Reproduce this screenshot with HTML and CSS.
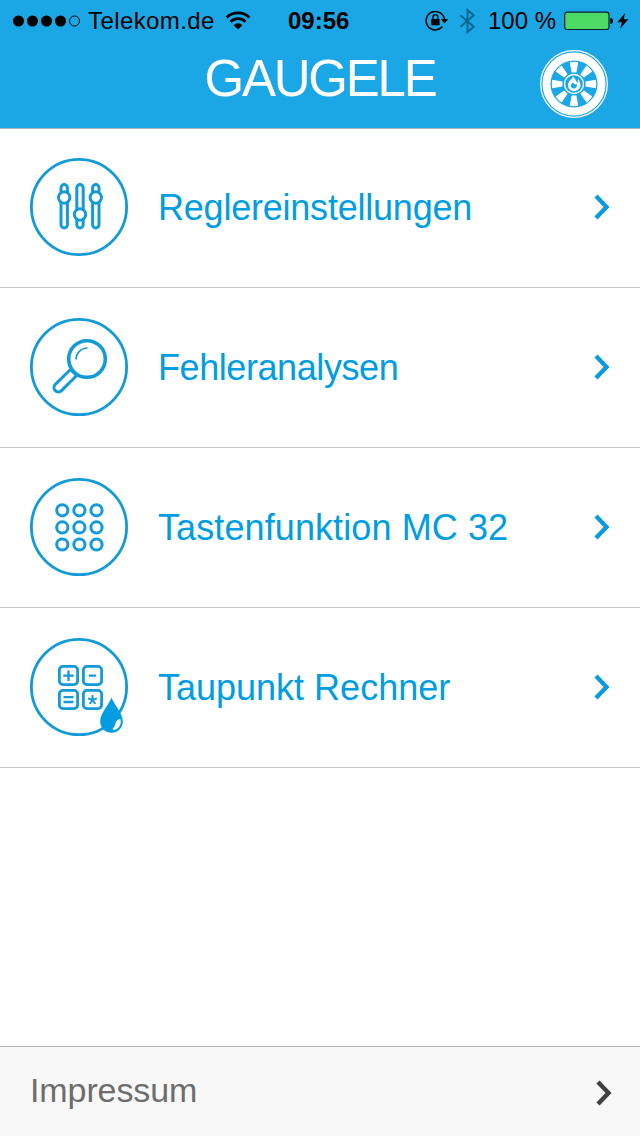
FILE: index.html
```html
<!DOCTYPE html>
<html lang="de">
<head>
    <meta charset="utf-8">
    <title>Gaugele</title>
    <link rel="stylesheet" href="styles.css">
</head>
<body>
    <header class="header">
        <div class="status">
            <svg class="signal" width="68" height="12" viewBox="0 0 68 12">
                <circle cx="5.500" cy="6" r="5.5"/>
                <circle cx="19.500" cy="6" r="5.5"/>
                <circle cx="33.500" cy="6" r="5.5"/>
                <circle cx="47.500" cy="6" r="5.5"/>
                <circle cx="61.500" cy="6" r="5" fill="none" stroke="#000"/>
            </svg>
            <span class="carrier">Telekom.de</span>
            <svg class="wifi" width="26" height="20" viewBox="0 0 26 20" fill="none" stroke="#000" stroke-width="2.8">
                <path d="M1.7 6.4a16.2 16.2 0 0 1 22.6 0M5.5 10.7a10.8 10.8 0 0 1 15 0"/>
                <path d="M8.6 14.2a6.2 6.2 0 0 1 8.8 0L13 18.5z" fill="#000" stroke="none"/>
            </svg>
            <span class="time">09:56</span>
            <svg class="lock" width="24" height="22" viewBox="0 0 24 22">
                <path d="M17.400 16.600a9.200 9.200 0 1 1 2.100-6.600" fill="none" stroke="#000" stroke-width="1.5"/>
                <path d="M16 9.300h7.200L19.600 13.500z"/>
                <rect x="6.2" y="9" width="8.400" height="6.2" rx=".6"/>
                <path d="M8 10V7a2.400 2.400 0 0 1 4.8 0V10" fill="none" stroke="#000" stroke-width="1.4"/>
            </svg>
            <svg class="bluetooth" width="17" height="26" viewBox="0 0 17 26" fill="none" stroke="#096791" stroke-width="2">
                <path d="M1.5 7.3 14.7 18.7 8.5 24V2l6.2 5.3L1.5 18.7"/>
            </svg>
            <span class="percent">100 %</span>
            <svg class="battery" width="50" height="20" viewBox="0 0 50 20">
                <rect x=".7" y="1.2" width="44.3" height="17.3" rx="2.5" fill="#4cd964" stroke="#06222f" stroke-width="1.2"/>
                <path d="M46.3 7c1.8 0 2.7 1.2 2.7 3s-.9 3-2.7 3z"/>
            </svg>
            <svg class="bolt" width="12" height="16" viewBox="0 0 12 16">
                <path d="M8 0 .5 9.2h4.6L3 16l8.3-9.8H6.7z"/>
            </svg>
        </div>
        <div class="titlebar">
            <h1 class="title">GAUGELE</h1>
            <svg class="wheel" width="68" height="68" viewBox="-34 -34 68 68">
                <circle r="33.3" fill="none" stroke="#fff" stroke-width="1.3"/>
                <circle r="27.5" fill="none" stroke="#fff" stroke-width="8"/>
                <defs>
                    <path id="spoke" d="M-2.400-11.500-4.200-21.800a22 22 0 0 1 8.400 0L2.400-11.500z"/>
                </defs>
                <g fill="#fff">
                    <use href="#spoke"/>
                    <use href="#spoke" transform="rotate(45)"/>
                    <use href="#spoke" transform="rotate(90)"/>
                    <use href="#spoke" transform="rotate(135)"/>
                    <use href="#spoke" transform="rotate(180)"/>
                    <use href="#spoke" transform="rotate(225)"/>
                    <use href="#spoke" transform="rotate(270)"/>
                    <use href="#spoke" transform="rotate(315)"/>
                </g>
                <circle r="9.500" fill="none" stroke="#fff" stroke-width="1.300"/>
                <path fill="#fff" d="M-1.500-7.500C-.5-5-6-4-6 1c0 4 3 6 6.200 6S6.500 4.500 6.500 1c0-3-2-4-1.500-6-1.500 1-1.500 2.500-1 4C2-1.500 2-5.500-1.500-7.500zM-1-1.500C0 0 1 1 2.800 0c.5 3-.8 4.600-2.800 4.600S-3.200 3.400-3.200 1.600c0-1.400 1.400-1.800 2.200-3.100z"/>
            </svg>
        </div>
    </header>

    <main class="menu">
        <a class="row">
            <svg class="icon" width="98" height="98" viewBox="0 0 98 98">
                <circle cx="49" cy="49" r="47.6"/>
                <g stroke-width="3">
                    <rect x="31" y="26.500" width="6.400" height="43.500" rx="3.200"/>
                    <rect x="46.800" y="26.500" width="6.400" height="43.500" rx="3.200"/>
                    <rect x="62.600" y="26.500" width="6.400" height="43.500" rx="3.200"/>
                    <circle cx="34.200" cy="39.500" r="5.700" fill="#fff"/>
                    <circle cx="50" cy="56.500" r="5.700" fill="#fff"/>
                    <circle cx="65.800" cy="39.500" r="5.700" fill="#fff"/>
                </g>
            </svg>
            <span class="label tight">Reglereinstellungen</span>
            <svg class="arrow" width="18" height="28" viewBox="0 0 18 28"><path d="m3 3 10.500 11L3 25"/></svg>
        </a>
        <a class="row">
            <svg class="icon" width="98" height="98" viewBox="0 0 98 98">
                <circle cx="49" cy="49" r="47.6"/>
                <circle cx="57" cy="41" r="18.300" stroke-width="3.600"/>
                <path d="M46 41.500a11.500 11.500 0 0 1 11.500-11.500" stroke-width="1.700"/>
                <path d="M40.500 51.500 25.300 66.400a4.300 4.300 0 0 0 6.200 6.200L46.700 57.500M40.300 51.200l6.500 6.500" stroke-width="3"/>
            </svg>
            <span class="label tighter">Fehleranalysen</span>
            <svg class="arrow" width="18" height="28" viewBox="0 0 18 28"><path d="m3 3 10.500 11L3 25"/></svg>
        </a>
        <a class="row">
            <svg class="icon" width="98" height="98" viewBox="0 0 98 98">
                <circle cx="49" cy="49" r="47.6"/>
                <g stroke-width="3">
                    <circle cx="32.300" cy="32.300" r="5.600"/>
                    <circle cx="49.400" cy="32.300" r="5.600"/>
                    <circle cx="66.500" cy="32.300" r="5.600"/>
                    <circle cx="32.300" cy="49.400" r="5.600"/>
                    <circle cx="49.400" cy="49.400" r="5.600"/>
                    <circle cx="66.500" cy="49.400" r="5.600"/>
                    <circle cx="32.300" cy="66.500" r="5.600"/>
                    <circle cx="49.400" cy="66.500" r="5.600"/>
                    <circle cx="66.500" cy="66.500" r="5.600"/>
                </g>
            </svg>
            <span class="label wide">Tastenfunktion MC 32</span>
            <svg class="arrow" width="18" height="28" viewBox="0 0 18 28"><path d="m3 3 10.500 11L3 25"/></svg>
        </a>
        <a class="row">
            <svg class="icon" width="98" height="98" viewBox="0 0 98 98">
                <circle cx="49" cy="49" r="47.6"/>
                <g stroke-width="2.800">
                    <rect x="29.400" y="28.400" width="18.200" height="18.200" rx="3.500"/>
                    <rect x="53.400" y="28.400" width="18.200" height="18.200" rx="3.500"/>
                    <rect x="29.400" y="52.400" width="18.200" height="18.200" rx="3.500"/>
                    <rect x="53.400" y="52.400" width="18.200" height="18.200" rx="3.500"/>
                </g>
                <path d="M33.300 37.700h10.400M38.500 32.500v10.400M58.800 37.700h7.400M33.500 59.200h10M33.500 64h10" stroke-width="2.300"/>
                <path d="M62.500 57v5M58 60.400l4.500 1.600M67 60.400 62.500 62M59.700 66l2.800-4M65.300 66l-2.800-4" stroke-width="2"/>
                <path d="M81.500 59.500c2 6.500 11.300 15.500 11.300 24a11.300 11.300 0 0 1-22.600 0c0-8.500 9.300-17.500 11.300-24z" fill="#009ee0" stroke="none"/>
                <path d="M90.300 81c1.700 5-1.300 10-6.300 11-1.700-.5-1.300-1.700-.3-2.700 1.800-1.600 1.400-2.700 2-4.700.7-2 3-3.600 4.600-3.600z" fill="#fff" stroke="none"/>
            </svg>
            <span class="label">Taupunkt Rechner</span>
            <svg class="arrow" width="18" height="28" viewBox="0 0 18 28"><path d="m3 3 10.500 11L3 25"/></svg>
        </a>
    </main>

    <footer class="footer">
        <span class="imprint">Impressum</span>
        <svg class="arrow dark" width="18" height="28" viewBox="0 0 18 28"><path d="m3 3 10.500 11L3 25"/></svg>
    </footer>
</body>
</html>
```
FILE: styles.css
```css
body {
    margin: 0;
    height: 1136px;
    display: flex;
    flex-direction: column;
    background: #fff;
    font-family: "Liberation Sans", Arial, sans-serif;
    overflow: hidden;
}

svg {
    display: block;
    flex: none;
}

.header {
    height: 128px;
    background: #1ba7e6;
    border-bottom: 1px solid #a5b4be;
    box-sizing: content-box;
}

.status {
    height: 40px;
    padding-top: 1px;
    display: flex;
    align-items: center;
    font-size: 24px;
    line-height: 40px;
    white-space: nowrap;
}

.signal {
    margin-left: 13px;
}

.carrier {
    width: 126px;
    margin-left: 7px;
    letter-spacing: 0.4px;
}

.wifi {
    margin-left: 11px;
}

.time {
    width: 64px;
    margin-left: 37px;
    font-weight: bold;
}

.lock {
    margin-left: 73px;
}

.bluetooth {
    margin-left: 10px;
}

.percent {
    width: 70px;
    margin-left: 12px;
}

.battery {
    margin-left: 6px;
}

.bolt {
    margin-left: 3px;
}

.titlebar {
    height: 87px;
    display: grid;
    grid-template-columns: 100px 1fr 100px;
}

.title {
    grid-column: 2;
    margin: 8px 0 0;
    font-size: 51px;
    font-weight: normal;
    line-height: 60px;
    letter-spacing: -2.2px;
    text-align: center;
    color: #fff;
}

.wheel {
    margin-top: 9px;
}

.menu {
    flex: 1;
}

.row {
    height: 160px;
    box-sizing: border-box;
    padding: 0 29px 0 30px;
    display: flex;
    align-items: center;
    border-bottom: 1px solid #c8c8c8;
    color: #009ee0;
}

.row:first-child {
    height: 159px;
}

.row svg {
    margin-bottom: 2px;
}

.icon {
    fill: none;
    stroke: #149bd7;
    stroke-width: 2.8;
}

.label {
    flex: 1;
    margin-left: 30px;
    font-size: 36px;
}

.tight {
    letter-spacing: -0.22px;
}

.tighter {
    letter-spacing: -0.42px;
}

.wide {
    letter-spacing: 0.1px;
}

.arrow {
    fill: none;
    stroke: #0f9bda;
    stroke-width: 4.4;
}

.footer {
    height: 90px;
    box-sizing: border-box;
    padding: 0 27px 0 30px;
    display: flex;
    align-items: center;
    justify-content: space-between;
    background: #f8f8f8;
    border-top: 1px solid #b2b2b2;
}

.imprint {
    margin-bottom: 2px;
    font-size: 34px;
    letter-spacing: -0.1px;
    color: #6d6d6d;
}

.dark {
    margin-top: 2px;
    stroke: #404040;
}
```
